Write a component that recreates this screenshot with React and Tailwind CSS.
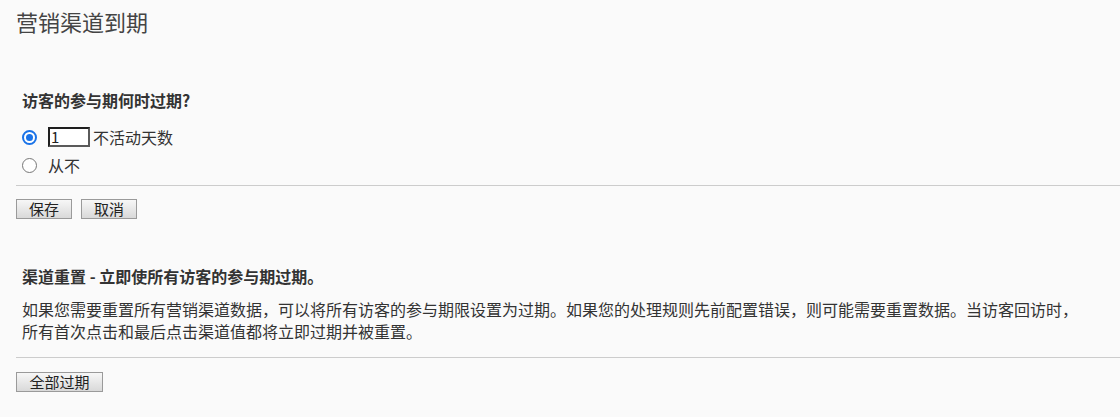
import React from "react";

const font = { fontFamily: '"Noto Sans CJK SC", "Noto Sans", sans-serif' };

function Btn({ children, className = "" }) {
  return (
    <button
      className={
        "h-[20px] border border-[#9a9a9a] bg-gradient-to-b from-[#f7f7f7] to-[#d9d9d9] text-[15px] leading-[18px] text-[#222] flex items-center justify-center " +
        className
      }
    >
      {children}
    </button>
  );
}

function Radio({ checked }) {
  return checked ? (
    <span className="w-[15px] h-[15px] rounded-full border-2 border-[#1a73e8] bg-white flex items-center justify-center shrink-0">
      <span className="w-[7px] h-[7px] rounded-full bg-[#1a73e8]" />
    </span>
  ) : (
    <span className="w-[15px] h-[15px] rounded-full border border-[#777] bg-white shrink-0" />
  );
}

export default function App() {
  return (
    <div
      lang="zh-CN"
      className="min-h-[417px] w-[1120px] bg-[#fafafa] text-[#333] [text-spacing-trim:space-all]"
      style={font}
    >
      <div className="pl-[16px] pt-[6px]">
        <h1 className="text-[22px] leading-[30px] text-[#444]">营销渠道到期</h1>

        <div className="mt-[52px] px-[6px]">
          <h2 className="text-[16px] leading-[24px] font-bold">访客的参与期何时过期?</h2>
          <div className="mt-[14px] flex items-center h-[22px]">
            <Radio checked />
            <div className="ml-[11px] w-[42px] h-[20px] border-2 border-t-[#1e1e1e] border-l-[#1e1e1e] border-r-[#5a5a5a] border-b-[#5a5a5a] bg-white text-[15px] leading-[16px] pl-[1px] text-[#222]">
              1
            </div>
            <span className="ml-[3px] text-[16px] leading-[22px]">不活动天数</span>
          </div>
          <div className="mt-[6px] flex items-center h-[22px]">
            <Radio />
            <span className="ml-[11px] text-[16px] leading-[22px]">从不</span>
          </div>
        </div>

        <div className="mt-[9px] h-px bg-[#cccccc]" />

        <div className="mt-[13px] flex gap-[9px]">
          <Btn className="w-[56px]">保存</Btn>
          <Btn className="w-[56px]">取消</Btn>
        </div>

        <div className="mt-[45px] pl-[6px] pr-[20px]">
          <h2 className="text-[16px] leading-[24px] font-bold">渠道重置 - 立即使所有访客的参与期过期。</h2>
          <p className="mt-[10px] text-[16px] leading-[22px]">
            如果您需要重置所有营销渠道数据，可以将所有访客的参与期限设置为过期。如果您的处理规则先前配置错误，则可能需要重置数据。当访客回访时，
            <br />
            所有首次点击和最后点击渠道值都将立即过期并被重置。
          </p>
        </div>

        <div className="mt-[15px] h-px bg-[#cccccc]" />

        <div className="mt-[14px] flex">
          <Btn className="w-[87px] h-[19px]">全部过期</Btn>
        </div>
      </div>
    </div>
  );
}
